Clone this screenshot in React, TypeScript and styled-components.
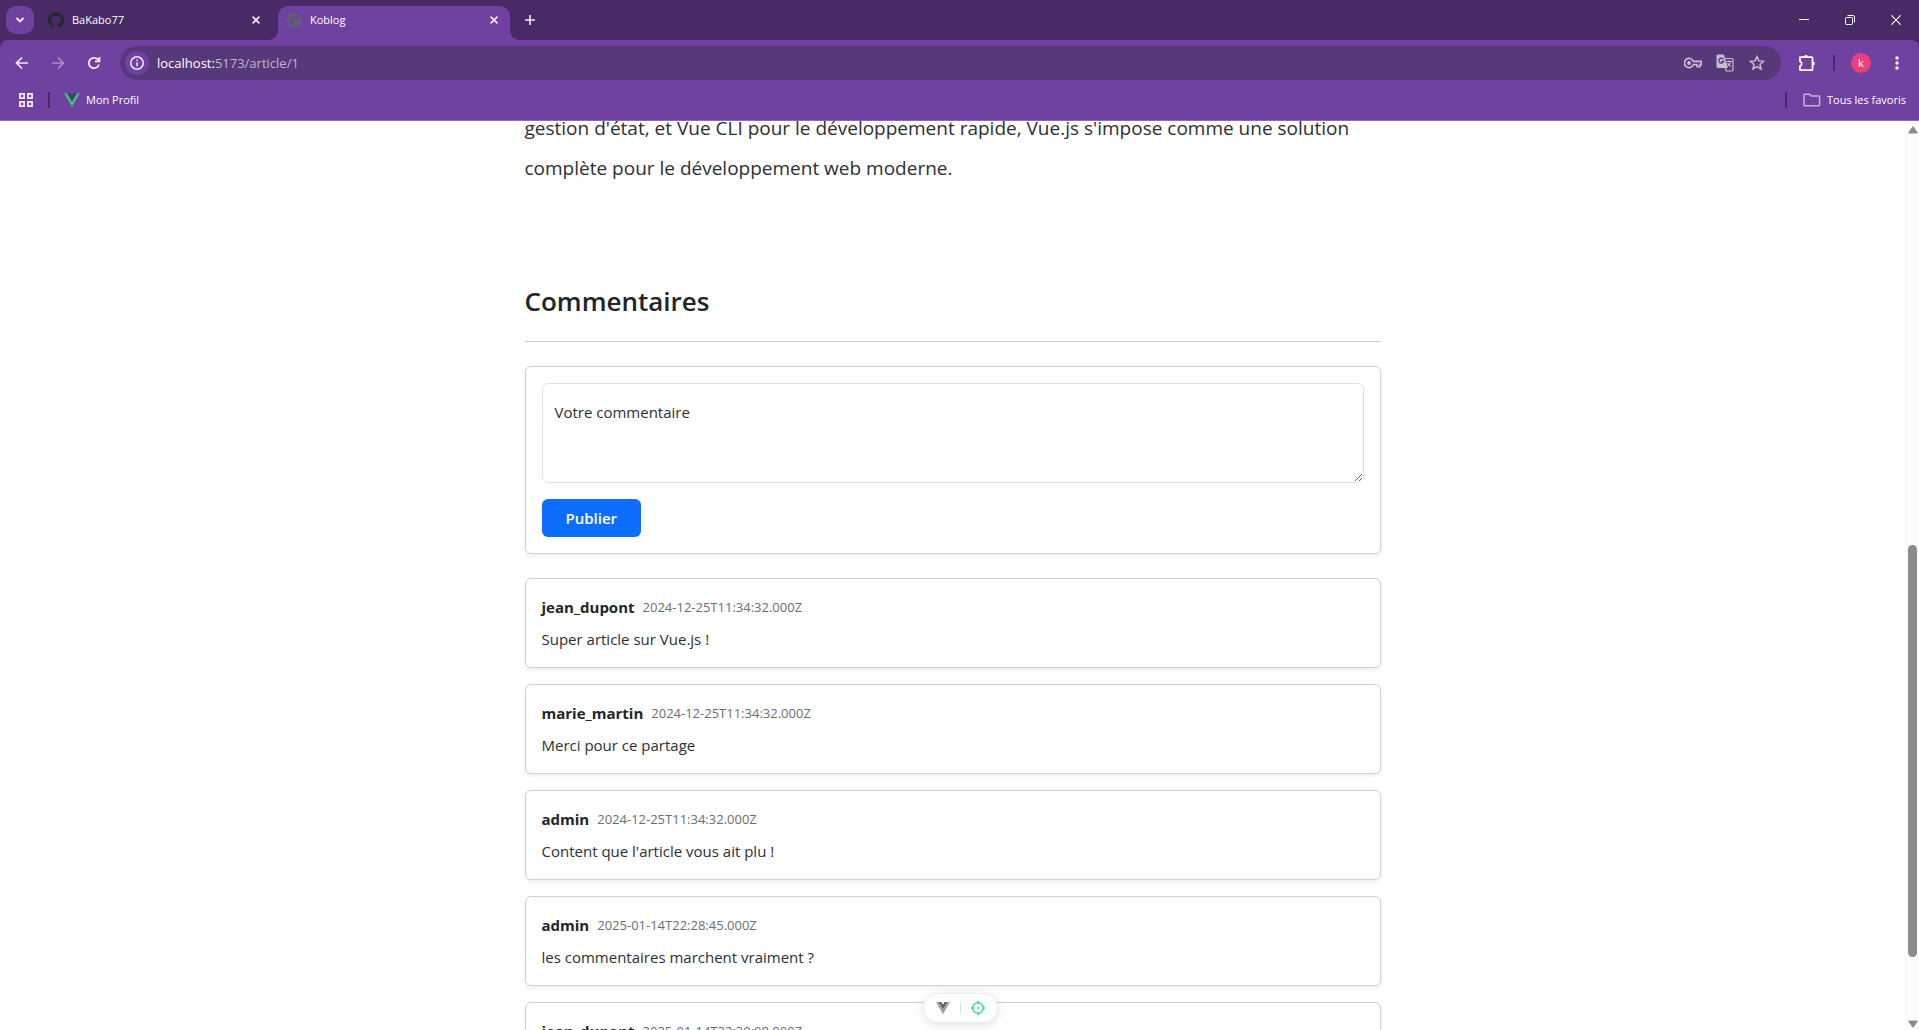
import React from "react";
import styled, { createGlobalStyle } from "styled-components";

const color = {
  frame: "#472a66",
  toolbar: "#6f42a1",
  omnibox: "#57387a",
  text: "#212529",
  border: "#d0d1d2",
  primary: "#0d6efd",
};

const GlobalStyle = createGlobalStyle`
  *, *::before, *::after { box-sizing: border-box; }
  body {
    margin: 0;
    font-family: "Open Sans", "Noto Sans", sans-serif;
    font-size: 15px;
    line-height: 24px;
    color: ${color.text};
    background: #fff;
  }
  button, textarea, input { font-family: inherit; }
`;

const Browser = styled.div`
  display: flex;
  flex-direction: column;
  height: 100vh;
  overflow: hidden;
`;

const TabStrip = styled.div`
  display: flex;
  align-items: center;
  height: 40px;
  flex: none;
  padding-left: 6px;
  background: ${color.frame};
  color: #fff;
`;

const IconButton = styled.button<{ $width?: number; $dim?: boolean }>`
  display: flex;
  align-items: center;
  justify-content: center;
  flex: none;
  width: ${(p) => p.$width ?? 28}px;
  height: 28px;
  padding: 0;
  border: 0;
  background: none;
  color: #f1ecf6;
  opacity: ${(p) => (p.$dim ? 0.45 : 1)};
`;

const TabSearch = styled(IconButton)`
  border-radius: 10px;
  background: ${color.toolbar};
`;

const Tab = styled.div<{ $active?: boolean }>`
  position: relative;
  display: flex;
  align-items: center;
  align-self: flex-end;
  gap: 8px;
  flex: none;
  width: 232px;
  height: 34px;
  padding: 0 2px 6px 8px;
  border-radius: 10px 10px 0 0;
  background: ${(p) => (p.$active ? color.toolbar : "none")};
  font-size: 11px;
  line-height: 16px;

  &::before,
  &::after {
    content: "";
    display: ${(p) => (p.$active ? "block" : "none")};
    position: absolute;
    bottom: 0;
    width: 10px;
    height: 10px;
  }
  &::before {
    left: -10px;
    background: radial-gradient(circle at 0 0, ${color.frame} 10px, ${color.toolbar} 10px);
  }
  &::after {
    right: -10px;
    background: radial-gradient(circle at 100% 0, ${color.frame} 10px, ${color.toolbar} 10px);
  }
`;

const IdleTab = styled(Tab)`
  width: 238px;
  margin-left: 6px;
  padding-right: 8px;
`;

const TabTitle = styled.span`
  flex: 1;
  white-space: nowrap;
`;

const WindowControls = styled.div`
  display: flex;
  align-self: stretch;
  margin-left: auto;
`;

const WindowButton = styled(IconButton)`
  width: 46px;
  height: 40px;
  color: #fff;
`;

const ToolbarFrame = styled.div`
  flex: none;
  background: ${color.frame};
`;

const Toolbar = styled.div`
  border-radius: 8px 8px 0 0;
  border-bottom: 1px solid #9068b8;
  background: ${color.toolbar};
`;

const NavRow = styled.div`
  display: flex;
  align-items: center;
  height: 46px;
  padding: 0 8px;
  gap: 8px;
`;

const AddressBar = styled.form`
  display: flex;
  align-items: center;
  flex: 1;
  height: 34px;
  margin: 0 4px;
  padding: 0 10px 0 5px;
  gap: 4px;
  border-radius: 17px;
  background: ${color.omnibox};
`;

const SiteInfo = styled(IconButton)`
  width: 24px;
  height: 24px;
  border-radius: 12px;
  background: ${color.toolbar};
`;

const Address = styled.div`
  flex: 1;
  padding-left: 4px;
  font-size: 13px;
  line-height: 20px;
  color: #c3b5d0;

  b {
    font-weight: 400;
    color: #fff;
  }
`;

const Divider = styled.span`
  flex: none;
  width: 2px;
  height: 16px;
  background: ${color.frame};
`;

const NavEnd = styled.div`
  display: flex;
  align-items: center;
  gap: 12px;
`;

const Avatar = styled.button`
  width: 20px;
  height: 20px;
  margin-left: 4px;
  padding: 0;
  border: 0;
  border-radius: 10px;
  background: #ec407a;
  color: #fff;
  font-size: 11px;
  line-height: 16px;
`;

const Bookmarks = styled.nav`
  display: flex;
  align-items: center;
  height: 34px;
  padding: 0 13px 6px 12px;
`;

const BookmarkDivider = styled(Divider)`
  margin-left: 8px;
`;

const BookmarkLink = styled.a`
  display: flex;
  align-items: center;
  gap: 6px;
  margin-left: 14px;
  color: #fff;
  font-size: 11px;
  line-height: 16px;
  text-decoration: none;
`;

const AllBookmarks = styled(BookmarkLink)`
  margin-left: 16px;
`;

const Spacer = styled.span`
  flex: 1;
`;

const Viewport = styled.div`
  display: flex;
  flex: 1;
  min-height: 0;
`;

const Page = styled.main`
  flex: 1;
  overflow: hidden;
  padding: 0 24px;
`;

const Article = styled.div`
  max-width: 856px;
  margin: -13px auto 0;
`;

const Body = styled.p`
  margin: 0;
  font-size: 19px;
  line-height: 40px;
  color: #2c3034;
`;

const Heading = styled.h2`
  margin: 96px 0 0;
  font-size: 26px;
  line-height: 34px;
  font-weight: 600;
`;

const Rule = styled.hr`
  margin: 23px 0 24px;
  border: 0;
  border-top: 1px solid #c8c9ca;
`;

const Card = styled.div`
  padding: 16px;
  border: 1px solid ${color.border};
  border-radius: 6px;
  background: #fff;
  box-shadow: 0 2px 4px rgba(0, 0, 0, 0.075);
`;

const CommentForm = styled(Card).attrs({ as: "form" })`
  display: flex;
  flex-direction: column;
  align-items: flex-start;
  gap: 16px;
  margin-bottom: 24px;
`;

const Field = styled.div`
  position: relative;
  display: flex;
  width: 100%;
`;

const FieldLabel = styled.label`
  position: absolute;
  top: 17px;
  left: 13px;
  color: #2c3034;
  pointer-events: none;
`;

const TextArea = styled.textarea`
  width: 100%;
  height: 100px;
  padding: 16px 12px;
  border: 1px solid #dee2e6;
  border-radius: 6px;
  background: #fff;
  color: inherit;
  font-size: 15px;
  line-height: 24px;
  resize: vertical;

  &:not(:placeholder-shown) + ${FieldLabel} {
    display: none;
  }
`;

const Publish = styled.button`
  height: 38px;
  padding: 0 24px;
  border: 0;
  border-radius: 6px;
  background: ${color.primary};
  color: #fff;
  font-size: 15px;
  line-height: 24px;
  font-weight: 600;
`;

const CommentList = styled.div`
  display: flex;
  flex-direction: column;
  gap: 16px;
`;

const CommentHead = styled.div`
  display: flex;
  align-items: center;
  gap: 8px;
  margin-bottom: 8px;
`;

const Author = styled.strong`
  font-weight: 700;
`;

const Stamp = styled.time`
  font-size: 13px;
  color: #6b6e71;
`;

const Message = styled.p`
  margin: 0;
  color: #2c3034;
`;

const ScrollTrack = styled.div`
  display: flex;
  flex-direction: column;
  align-items: center;
  flex: none;
  width: 14px;
  padding: 5px 0 2px 1px;
  background: #fcfcfc;
`;

const ScrollThumb = styled.div`
  width: 9px;
  flex: 412;
  border-radius: 5px;
  background: #8b8b8b;
`;

const ScrollGap = styled.div<{ $grow: number }>`
  flex: ${(p) => p.$grow};
`;

const DevPill = styled.div`
  position: fixed;
  left: 50%;
  bottom: 7px;
  display: flex;
  align-items: center;
  justify-content: space-between;
  width: 75px;
  height: 30px;
  margin-left: -37px;
  padding: 0 11px;
  border: 1px solid #eee;
  border-radius: 15px;
  background: #fff;
  box-shadow: 0 2px 10px rgba(0, 0, 0, 0.12);
`;

const PillButton = styled(IconButton)`
  width: 16px;
  height: 16px;
`;

const PillDivider = styled.span`
  width: 1px;
  height: 10px;
  background: #ddd;
`;

const CloseIcon = () => (
  <svg width="8" height="8" viewBox="0 0 8 8" stroke="currentColor" strokeWidth="1.6">
    <path d="M.6.6l6.8 6.8M7.4.6L.6 7.4" />
  </svg>
);

const GithubIcon = () => (
  <svg width="16" height="16" viewBox="0 0 16 16" fill="#24292f">
    <path d="M8 0C3.58 0 0 3.58 0 8c0 3.54 2.29 6.53 5.47 7.59.4.07.55-.17.55-.38 0-.19-.01-.82-.01-1.49-2.01.37-2.53-.49-2.69-.94-.09-.23-.48-.94-.82-1.13-.28-.15-.68-.52-.01-.53.63-.01 1.08.58 1.23.82.72 1.21 1.87.87 2.33.66.07-.52.28-.87.51-1.07-1.78-.2-3.64-.89-3.64-3.95 0-.87.31-1.59.82-2.15-.08-.2-.36-1.02.08-2.12 0 0 .67-.21 2.2.82.64-.18 1.32-.27 2-.27s1.36.09 2 .27c1.53-1.04 2.2-.82 2.2-.82.44 1.1.16 1.92.08 2.12.51.56.82 1.27.82 2.15 0 3.07-1.87 3.75-3.65 3.95.29.25.54.73.54 1.48 0 1.07-.01 1.93-.01 2.2 0 .21.15.46.55.38A8.01 8.01 0 0 0 16 8c0-4.42-3.58-8-8-8z" />
  </svg>
);

const GlobeIcon = () => (
  <svg width="16" height="16" viewBox="0 0 16 16">
    <circle cx="8" cy="8" r="7.2" fill="#5f6368" />
    <path
      d="M2.4 7.6h3.2c1.5 0 2.6 1 2.6 2.2v.6H6.4v3.2C4 12.9 2.3 10.5 2.4 7.6zM9.6 2.6v1c0 .9-.7 1.5-1.5 1.5H6.6v1.5h2.6c1 0 1.2 1.3 1.2 2h3c.3-2.8-1.3-5.2-3.8-6z"
      fill={color.toolbar}
    />
  </svg>
);

const VueIcon = ({ size = 16, outer = "#41b883", inner = "#34495e" }) => (
  <svg width={size} height={size} viewBox="0 0 16 16">
    <path d="M0 1h3.2L8 9.3 12.8 1H16L8 15z" fill={outer} />
    <path d="M3.2 1h3L8 4.2 9.8 1h3L8 9.3z" fill={inner} />
  </svg>
);

const ArrowIcon = ({ flip }: { flip?: boolean }) => (
  <svg width="14" height="14" viewBox="0 0 14 14" fill="none" stroke="currentColor" strokeWidth="1.7">
    <path d={flip ? "M1 7h11M7 1.5L12.5 7 7 12.5" : "M13 7H2M7 1.5L1.5 7 7 12.5"} />
  </svg>
);

const comments = [
  { author: "jean_dupont", date: "2024-12-25T11:34:32.000Z", text: "Super article sur Vue.js !" },
  { author: "marie_martin", date: "2024-12-25T11:34:32.000Z", text: "Merci pour ce partage" },
  { author: "admin", date: "2024-12-25T11:34:32.000Z", text: "Content que l'article vous ait plu !" },
  { author: "admin", date: "2025-01-14T22:28:45.000Z", text: "les commentaires marchent vraiment ?" },
  { author: "jean_dupont", date: "2025-01-14T22:30:08.000Z", text: "" },
];

const Chrome = () => (
  <>
    <TabStrip>
      <TabSearch aria-label="Rechercher dans les onglets">
        <svg width="10" height="8" viewBox="0 0 10 8" fill="none" stroke="currentColor" strokeWidth="1.9">
          <path d="M1.5 2L5 5.5 8.5 2" />
        </svg>
      </TabSearch>
      <IdleTab>
        <GithubIcon />
        <TabTitle>BaKabo77</TabTitle>
        <IconButton aria-label="Fermer"><CloseIcon /></IconButton>
      </IdleTab>
      <Tab $active>
        <GlobeIcon />
        <TabTitle>Koblog</TabTitle>
        <IconButton aria-label="Fermer"><CloseIcon /></IconButton>
      </Tab>
      <IconButton $width={40} aria-label="Nouvel onglet">
        <svg width="10" height="10" viewBox="0 0 10 10" stroke="currentColor" strokeWidth="1.6">
          <path d="M5 0v10M0 5h10" />
        </svg>
      </IconButton>
      <WindowControls>
        <WindowButton aria-label="Réduire">
          <svg width="10" height="10" viewBox="0 0 10 10" stroke="currentColor"><path d="M0 4.5h10" /></svg>
        </WindowButton>
        <WindowButton aria-label="Restaurer">
          <svg width="10" height="10" viewBox="0 0 10 10" fill="none" stroke="currentColor">
            <rect x=".5" y="2.5" width="7" height="7" rx="1" />
            <path d="M2.5.5H8A1.5 1.5 0 0 1 9.5 2v5.5" />
          </svg>
        </WindowButton>
        <WindowButton aria-label="Fermer la fenêtre">
          <svg width="10" height="10" viewBox="0 0 10 10" stroke="currentColor" strokeWidth="1.1">
            <path d="M.3.3l9.4 9.4M9.7.3L.3 9.7" />
          </svg>
        </WindowButton>
      </WindowControls>
    </TabStrip>
    <ToolbarFrame>
      <Toolbar>
        <NavRow>
          <IconButton aria-label="Retour"><ArrowIcon /></IconButton>
          <IconButton $dim aria-label="Avancer"><ArrowIcon flip /></IconButton>
          <IconButton aria-label="Actualiser">
            <svg width="14" height="14" viewBox="0 0 14 14" fill="none" stroke="currentColor" strokeWidth="1.8">
              <path d="M12 8.5A5.2 5.2 0 1 1 10.8 3.4L12.3 5M12.4 1v4.3H8" />
            </svg>
          </IconButton>
          <AddressBar>
            <SiteInfo type="button" aria-label="Informations sur le site">
              <svg width="14" height="14" viewBox="0 0 14 14" fill="none" stroke="currentColor" strokeWidth="1.5">
                <circle cx="7" cy="7" r="6.2" />
                <path d="M7 6.2v4M7 3.6v1.5" />
              </svg>
            </SiteInfo>
            <Address><b>localhost:</b>5173/article/1</Address>
            <IconButton type="button" aria-label="Mots de passe">
              <svg width="18" height="12" viewBox="0 0 18 12" fill="none" stroke="#c7bfce" strokeWidth="1.6">
                <path d="M9.3 4.4H17.3v3.2h-1.3v2h-3v-2H9.3A4.6 4.6 0 1 1 9.3 4.4z" />
                <circle cx="5" cy="6" r="1.9" fill="#c7bfce" stroke="none" />
              </svg>
            </IconButton>
            <IconButton type="button" aria-label="Traduire">
              <svg width="18" height="18" viewBox="0 0 18 18" fill="none" stroke="#c7bfce">
                <path d="M8.8 4.5h7.2a1 1 0 0 1 1 1v10.500a1 1 0 0 1-1 1h-5.500l-1.500-3" strokeWidth="1.200" />
                <path d="M1.500 1h6l3.800 12.500H1.500a.5.5 0 0 1-.5-.5V1.500a.5.5 0 0 1 .5-.5z" fill="#c7bfce" />
                <path d="M7.500 5.300A2.500 2.500 0 1 0 7.700 7.300H5.400" stroke={color.omnibox} strokeWidth="1.300" />
                <path d="M10.500 7.500h5.500M13 6.200v1.300M14.800 7.500c-.4 2-1.600 3.400-3.300 4.600M11.500 9c.9 1.500 2 2.600 3.400 3.400" strokeWidth="1.100" />
              </svg>
            </IconButton>
            <IconButton type="button" aria-label="Ajouter aux favoris">
              <svg width="16" height="16" viewBox="0 0 16 16" fill="none" stroke="#c7bfce" strokeWidth="1.5">
                <path d="M8 1.6l1.9 4.300 4.700.4-3.600 3.100 1.100 4.600L8 11.600 3.900 14 5 9.400 1.400 6.300l4.700-.4z" />
              </svg>
            </IconButton>
          </AddressBar>
          <NavEnd>
            <IconButton aria-label="Extensions">
              <svg width="18" height="18" viewBox="0 0 18 18" fill="none" stroke="#fff" strokeWidth="1.8">
                <path d="M2 3.200h11.500a1 1 0 0 1 1 1v11.300a.6.6 0 0 1-.6.600H2V12a2.400 2.400 0 0 0 0-4.600z" strokeLinejoin="round" />
                <path d="M6 3a2 2 0 0 1 4 0zM14.800 7.500a2 2 0 0 1 0 4z" fill="#fff" stroke="none" />
              </svg>
            </IconButton>
            <Divider />
            <Avatar aria-label="Profil">k</Avatar>
            <IconButton aria-label="Menu">
              <svg width="4" height="14" viewBox="0 0 4 14" fill="#fff">
                <circle cx="2" cy="2" r="1.7" /><circle cx="2" cy="7" r="1.7" /><circle cx="2" cy="12" r="1.7" />
              </svg>
            </IconButton>
          </NavEnd>
        </NavRow>
        <Bookmarks>
          <IconButton aria-label="Groupes d'onglets">
            <svg width="14" height="14" viewBox="0 0 14 14" fill="none" stroke="#f1ecf6" strokeWidth="1.7">
              <path d="M.9.9h4.2v4.2H.9zM8.9.9h4.2v4.2H8.9zM.9 8.9h4.2v4.2H.9zM8.9 8.9h4.2v4.2H8.9z" />
            </svg>
          </IconButton>
          <BookmarkDivider />
          <BookmarkLink href="#profil"><VueIcon /><span>Mon Profil</span></BookmarkLink>
          <Spacer />
          <Divider />
          <AllBookmarks href="#favoris">
            <svg width="18" height="14" viewBox="0 0 18 14" fill="none" stroke="#c3b5d0" strokeWidth="1.5">
              <path d="M1.9 1.200h4.600l1.700 1.800h7.400a1 1 0 0 1 1 1v7.800a1 1 0 0 1-1 1H2a1 1 0 0 1-1-1V2a.9.9 0 0 1 .9-.8z" />
            </svg>
            <span>Tous les favoris</span>
          </AllBookmarks>
        </Bookmarks>
      </Toolbar>
    </ToolbarFrame>
  </>
);

export default function App() {
  return (
    <Browser>
      <GlobalStyle />
      <Chrome />
      <Viewport>
        <Page>
          <Article>
            <Body>
              gestion d'état, et Vue CLI pour le développement rapide, Vue.js s'impose comme une solution
              complète pour le développement web moderne.
            </Body>
            <Heading>Commentaires</Heading>
            <Rule />
            <CommentForm>
              <Field>
                <TextArea id="comment" placeholder=" " />
                <FieldLabel htmlFor="comment">Votre commentaire</FieldLabel>
              </Field>
              <Publish type="button">Publier</Publish>
            </CommentForm>
            <CommentList>
              {comments.map((c) => (
                <Card key={c.author + c.date}>
                  <CommentHead>
                    <Author>{c.author}</Author>
                    <Stamp dateTime={c.date}>{c.date}</Stamp>
                  </CommentHead>
                  <Message>{c.text}</Message>
                </Card>
              ))}
            </CommentList>
          </Article>
        </Page>
        <ScrollTrack>
          <svg width="10" height="8" viewBox="0 0 10 8" fill="#8b8b8b">
            <path d="M4.2.9a1 1 0 0 1 1.6 0L9.5 6.2a.9.9 0 0 1-.8 1.3H1.3a.9.9 0 0 1-.8-1.3z" />
          </svg>
          <ScrollGap $grow={411} />
          <ScrollThumb />
          <ScrollGap $grow={63} />
          <svg width="10" height="8" viewBox="0 0 10 8" fill="#8b8b8b">
            <path d="M4.2 7.1a1 1 0 0 0 1.6 0L9.5 1.8A.9.9 0 0 0 8.7.5H1.3a.9.9 0 0 0-.8 1.3z" />
          </svg>
        </ScrollTrack>
      </Viewport>
      <DevPill>
        <PillButton aria-label="Vue DevTools"><VueIcon size={14} outer="#a0a0a0" inner="#5c5c5c" /></PillButton>
        <PillDivider />
        <PillButton aria-label="Inspecter un composant">
          <svg width="16" height="16" viewBox="0 0 16 16" fill="none" stroke="#3ddc97" strokeWidth="1.5">
            <circle cx="8" cy="8" r="5.3" />
            <path d="M8 .8v3M8 12.2v3M.8 8h3M12.2 8h3" />
            <circle cx="8" cy="8" r="1" fill="#3ddc97" stroke="none" />
          </svg>
        </PillButton>
      </DevPill>
    </Browser>
  );
}
